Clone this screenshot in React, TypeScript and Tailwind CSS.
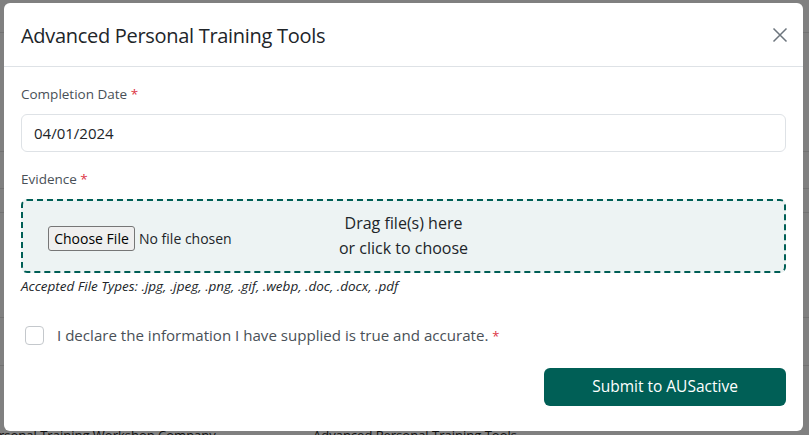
import React from "react";

const font = { fontFamily: '"Open Sans", "Noto Sans", sans-serif' };

export default function App() {
  return (
    <div
      className="relative w-[809px] h-[435px] overflow-hidden bg-[#808080]"
      style={font}
    >
      {/* background page (dimmed) */}
      <div className="flex flex-col">
        <div className="h-[33px] border-b border-[#727272]" />
        <div className="h-[119px] border-b border-[#727272]" />
        <div className="h-[37px] border-b border-[#727272]" />
        <div className="h-[24px] border-b border-[#727272]" />
        <div className="h-[105px] border-b border-[#727272]" />
        <div className="h-[48px] border-b border-[#727272]" />
        <div className="h-[63px]" />
        <div className="flex text-[13px] text-[#101010] leading-none">
          <span className="ml-[-1px] w-[314px]">rsonal Training Workshop Company</span>
          <span className="underline">Advanced Personal Training Tools</span>
        </div>
      </div>

      {/* modal */}
      <div className="absolute left-[4px] top-[3px] w-[799px] h-[428px] bg-white rounded-[6px] flex flex-col">
        <div className="h-[64px] flex items-center justify-between pl-[17px] pr-[15px] pt-[3px] border-b border-[#dee2e6]">
          <h1 className="text-[20px] font-medium text-[#212529] leading-none tracking-[-0.3px]">
            Advanced Personal Training Tools
          </h1>
          <svg width="16" height="16" viewBox="0 0 16 16" className="text-[#6c757d] -mt-[3px]">
            <path d="M1.5 1.5L14.5 14.5M14.5 1.5L1.5 14.5" stroke="currentColor" strokeWidth="1.5" />
          </svg>
        </div>

        <div className="px-[17px] pt-[18px] flex flex-col">
          <label className="text-[13.5px] leading-[19px] text-[#495057]">
            Completion Date <span className="text-[#dc3545]">*</span>
          </label>
          <div className="mt-[10px] h-[38px] border border-[#dee2e6] rounded-[6px] flex items-center px-[12px] text-[15px] text-[#212529]">
            04/01/2024
          </div>

          <label className="mt-[18px] text-[13.5px] leading-[19px] text-[#495057]">
            Evidence <span className="text-[#dc3545]">*</span>
          </label>
          <div className="relative mt-[10px] h-[74px] border-2 border-dashed border-[#005f56] rounded-[6px] bg-[#edf3f3] flex flex-col items-center justify-center text-[16px] leading-[25px] text-[#212529]">
            <span>Drag file(s) here</span>
            <span>or click to choose</span>
            <div className="absolute left-[25px] top-[25px] flex items-center gap-[4px] text-[14px]">
              <span className="h-[25px] w-[87px] flex items-center justify-center border border-[#767676] bg-[#efefef] rounded-[3px] text-[#000]">
                Choose File
              </span>
              <span className="text-[#212529]">No file chosen</span>
            </div>
          </div>
          <p className="mt-[4px] text-[13.5px] italic text-[#212529] leading-[19px]">
            Accepted File Types: .jpg, .jpeg, .png, .gif, .webp, .doc, .docx, .pdf
          </p>

          <div className="mt-[28px] flex items-center gap-[13px] pl-[4px]">
            <span className="w-[19px] h-[19px] border border-[#c4c8cc] rounded-[4px] bg-white" />
            <span className="text-[15.1px] text-[#495057]">
              I declare the information I have supplied is true and accurate.{" "}
              <span className="text-[#dc3545] text-[13px]">*</span>
            </span>
          </div>

          <div className="mt-[21px] flex justify-end">
            <button className="w-[242px] h-[38px] bg-[#005f56] rounded-[6px] text-white text-[15.5px]">
              Submit to AUSactive
            </button>
          </div>
        </div>
      </div>
    </div>
  );
}
